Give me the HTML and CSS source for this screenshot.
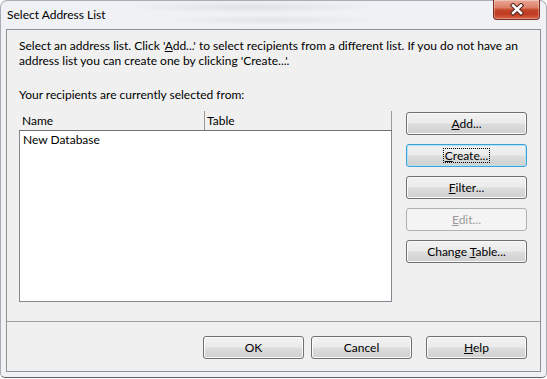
FILE: index.html
```html
<!DOCTYPE html>
<html lang="en">
<head>
    <meta charset="UTF-8" />
    <title>Select Address List</title>
    <link rel="stylesheet" href="styles.css">
</head>
<body>

    <div class="window">
        <div class="titlebar">
            <span class="title">Select Address List</span>
            <div class="close">
                <svg width="16" height="13" viewBox="0 0 16 13">
                    <path d="M4 2.5 L12 10 M12 2.5 L4 10" stroke="#5a2a22" stroke-width="4.6" stroke-linecap="square" />
                    <path d="M4 2.5 L12 10 M12 2.5 L4 10" stroke="#ffffff" stroke-width="2.4" stroke-linecap="square" />
                </svg>
            </div>
        </div>

        <div class="client">
            <div class="main">
                <p class="intro">
                    Select an address list. Click '<u>A</u>dd...' to select recipients from a different list. If you do not have an<br>
                    address list you can create one by clicking 'Create...'.
                </p>
                <p class="from">Your recipients are currently selected from:</p>

                <div class="pick">
                    <div class="list">
                        <div class="list-head">
                            <div class="col col-name">Name</div>
                            <div class="col col-table">Table</div>
                        </div>
                        <div class="list-body">
                            <div class="row">New Database</div>
                        </div>
                    </div>

                    <div class="side">
                        <button class="btn"><u>A</u>dd...</button>
                        <button class="btn btn-focus"><span class="focus"><u>C</u>reate...</span></button>
                        <button class="btn"><u>F</u>ilter...</button>
                        <button class="btn" disabled><u>E</u>dit...</button>
                        <button class="btn">Change <u>T</u>able...</button>
                    </div>
                </div>
            </div>

            <div class="footer">
                <button class="btn btn-small">OK</button>
                <button class="btn btn-small">Cancel</button>
                <button class="btn btn-small btn-help"><u>H</u>elp</button>
            </div>
        </div>
    </div>

</body>
</html>
```

FILE: styles.css
```css
body {
    margin: 0;
    background: #fff;
    color: #000;
    font-family: Lato, "Open Sans", sans-serif;
    font-size: 12px;
}

.window {
    position: relative;
    box-sizing: border-box;
    width: 547px;
    height: 378px;
    padding: 0 5px 5px 5px;
    display: flex;
    flex-direction: column;
    border: 1px solid #a9adb3;
    border-bottom-color: #5c5f63;
    border-radius: 7px 7px 5px 5px;
    background:
        radial-gradient(ellipse 130px 6px at 250px 6px, rgba(140, 145, 155, 0.16), transparent),
        radial-gradient(ellipse 110px 5px at 270px 19px, rgba(140, 145, 155, 0.14), transparent),
        #eff1f4;
}

.titlebar {
    height: 28px;
    line-height: 28px;
    padding-left: 1px;
}

.close {
    position: absolute;
    top: -1px;
    right: 6px;
    box-sizing: border-box;
    width: 47px;
    height: 20px;
    display: flex;
    align-items: center;
    justify-content: center;
    border: 1px solid #7a2c20;
    border-top: none;
    border-radius: 0 0 4px 4px;
    background: linear-gradient(#eaa899 0%, #dc8066 40%, #c4452a 52%, #c13b21 75%, #d8664a 100%);
    box-shadow: inset 0 0 0 1px rgba(255, 255, 255, 0.3);
}

.client {
    flex: 1;
    display: flex;
    flex-direction: column;
    border: 1px solid #8f9295;
    background: #f0f0f0;
}

.main {
    flex: 1;
    padding: 8px 13px 18px 12px;
}

.intro {
    margin: 0 0 19px 0;
    line-height: 15px;
}

.from {
    margin: 0 0 9px 0;
    line-height: 15px;
}

.pick {
    display: flex;
    gap: 14px;
}

.list {
    width: 373px;
}

.list-head {
    display: flex;
    height: 20px;
    box-sizing: border-box;
    border-bottom: 1px solid #6f7275;
    line-height: 19px;
}

.col {
    box-sizing: border-box;
    border-right: 1px solid #9a9a9a;
}

.col-name {
    width: 186px;
    padding-left: 3px;
}

.col-table {
    flex: 1;
    padding-left: 2px;
}

.list-body {
    box-sizing: border-box;
    height: 171px;
    padding: 1px 0 0 3px;
    border: 1px solid #828790;
    border-top: none;
    background: #fff;
    line-height: 15px;
}

.side {
    width: 121px;
    padding-top: 1px;
    display: flex;
    flex-direction: column;
    gap: 9px;
}

.btn {
    box-sizing: border-box;
    width: 121px;
    height: 23px;
    padding: 0;
    border: 1px solid #707070;
    border-radius: 3px;
    background: linear-gradient(#f2f2f2 0%, #ebebeb 48%, #dddddd 52%, #cfcfcf 100%);
    box-shadow: inset 0 0 0 1px #fbfbfb;
    font: inherit;
    color: #000;
}

.btn-focus {
    border-color: #3c9fd6;
    box-shadow: inset 0 0 0 1px #b4e2f7;
}

.focus {
    display: inline-block;
    line-height: 13px;
    padding: 0 1px;
    outline: 1px dotted #000;
}

.btn:disabled {
    border-color: #adb2b5;
    background: #f4f4f4;
    box-shadow: none;
    color: #9a9a9a;
}

.footer {
    height: 50px;
    box-sizing: border-box;
    border-top: 1px solid #a0a0a0;
    padding: 14px 13px 0 0;
    display: flex;
    justify-content: flex-end;
    align-items: flex-start;
    gap: 7px;
}

.btn-small {
    width: 101px;
}

.btn-help {
    margin-left: 7px;
}
```
